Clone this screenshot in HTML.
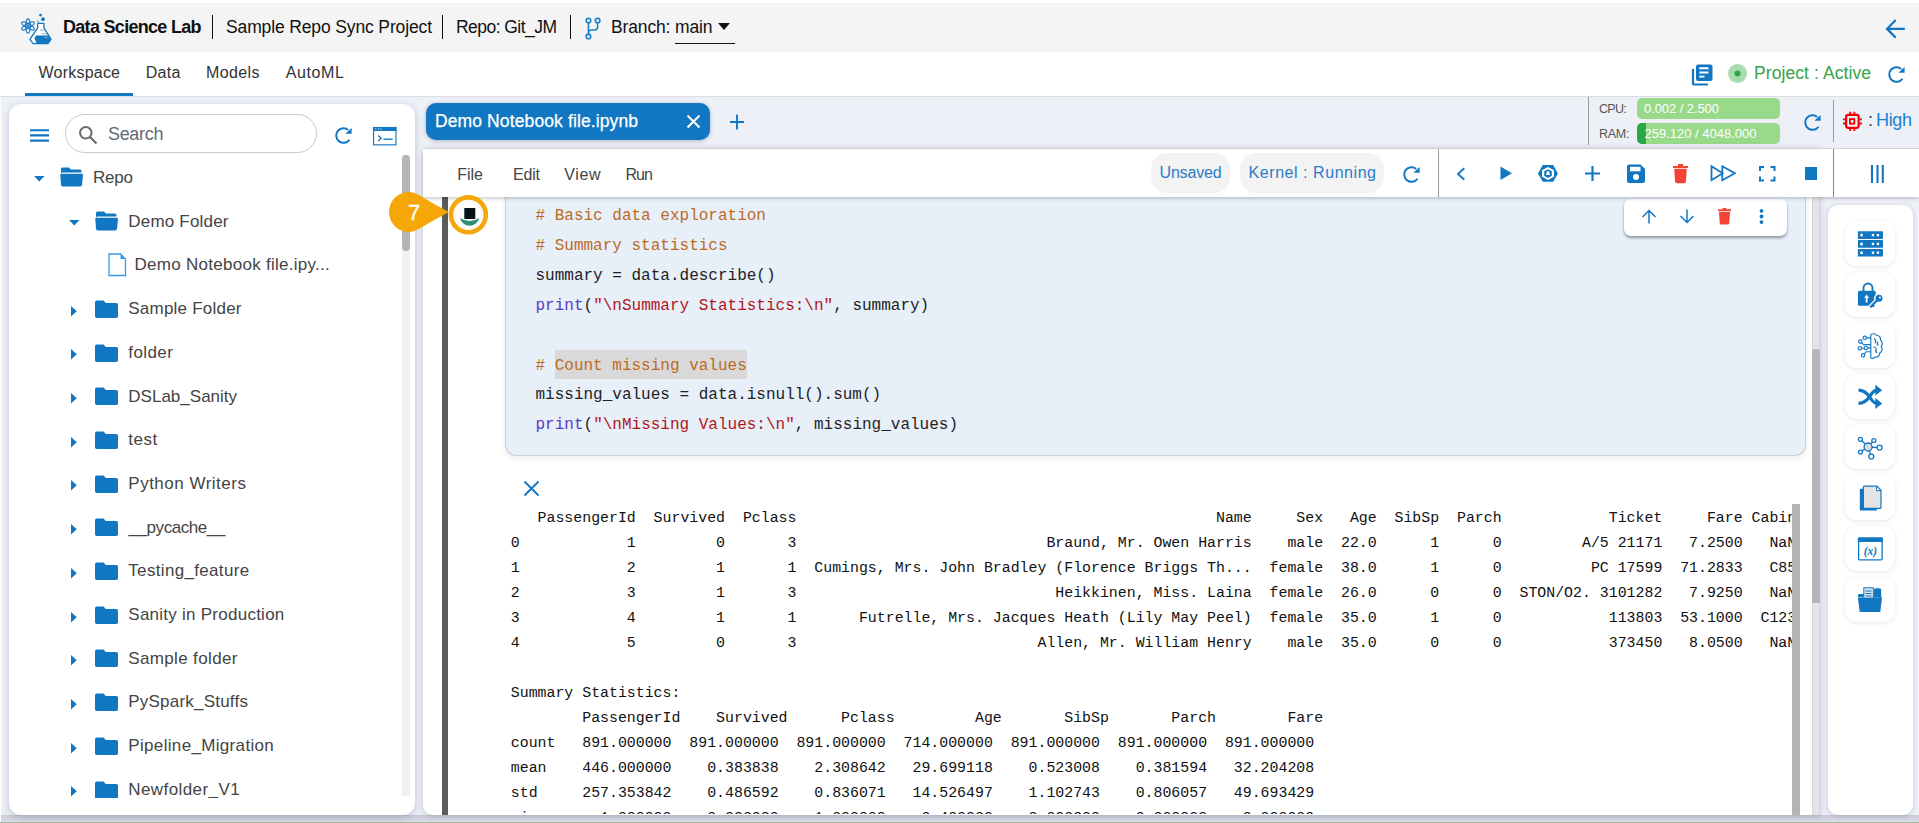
<!DOCTYPE html>
<html><head><meta charset="utf-8"><title>Data Science Lab</title>
<style>
html,body{margin:0;padding:0;width:1919px;height:823px;overflow:hidden;background:#eef0f8;}
body{position:relative;font-family:"Liberation Sans", sans-serif;}
.a{position:absolute;display:block;}
.t{position:absolute;white-space:pre;}
.mono{font-family:"Liberation Mono", monospace;}
</style></head><body>
<div class="a" style="left:0px;top:0px;width:1919px;height:3px;background:#fff"></div>
<div class="a" style="left:0px;top:3px;width:1919px;height:49px;background:#f4f4f4"></div>
<svg class="a" style="left:16px;top:10px;" width="38" height="36" viewBox="0 0 38 36">
<g fill="none" stroke="#1277c3" stroke-width="1.15">
<ellipse cx="12" cy="15.9" rx="2.2" ry="7.1"/>
<ellipse cx="12" cy="15.9" rx="2.2" ry="7.1" transform="rotate(60 12 15.9)"/>
<ellipse cx="12" cy="15.9" rx="2.2" ry="7.1" transform="rotate(120 12 15.9)"/>
<circle cx="12" cy="15.9" r="2.3" stroke-width="0.9"/>
</g>
<circle cx="12" cy="15.9" r="1.1" fill="#1277c3"/>
<path d="M21.7 13.4 H27.9 V17.8 L35.1 29.3 L31.9 33.7 H17.1 L13.9 29.3 L21.7 17.8 Z" fill="#fff" stroke="#1277c3" stroke-width="1.3" stroke-linejoin="round"/>
<path d="M21.2 10.6 L23.2 12.3" stroke="#1277c3" stroke-width="1"/>
<path d="M19.9 25.6 H32.8 L35.1 29.3 L31.9 33.7 H20.8 L18.5 28.6 Z" fill="#1277c3"/>
<circle cx="24.5" cy="5.1" r="1.4" fill="#1277c3"/>
<circle cx="27" cy="9.2" r="1.85" fill="#1277c3"/>
<path d="M24 20.1 H28.4 M26.1 23.8 H30.7" stroke="#999" stroke-width="0.9"/>
<path d="M28.2 27.6 H32.6" stroke="#9ab" stroke-width="0.9"/>
</svg>
<div class="t" style="left:63.00px;top:16.00px;font-size:18px;line-height:23px;color:#111;font-weight:700;letter-spacing:-0.698px;">Data Science Lab</div>
<div class="a" style="left:211.5px;top:15px;width:1.6px;height:24px;background:#111"></div>
<div class="t" style="left:226.00px;top:16.00px;font-size:17.5px;line-height:23px;color:#111;letter-spacing:-0.136px;">Sample Repo Sync Project</div>
<div class="a" style="left:441.5px;top:15px;width:1.6px;height:24px;background:#111"></div>
<div class="t" style="left:456.00px;top:16.00px;font-size:17.5px;line-height:23px;color:#111;letter-spacing:-0.544px;">Repo: Git_JM</div>
<div class="a" style="left:569.5px;top:15px;width:1.6px;height:24px;background:#111"></div>
<svg class="a" style="left:585.4px;top:17px;" width="18" height="23" viewBox="0 0 18 23"><g fill="none" stroke="#1a82c8" stroke-width="1.6">
<circle cx="3.45" cy="3.6" r="2.3"/><circle cx="12.6" cy="3.6" r="2.3"/><circle cx="3.45" cy="19.4" r="2.3"/>
<path d="M3.45 5.9 V17.1 M12.6 5.9 V10 Q12.6 13 9.6 13 H6.5 Q3.45 13 3.45 16"/></g></svg>
<div class="t" style="left:611.00px;top:16.00px;font-size:17.5px;line-height:23px;color:#111;letter-spacing:-0.146px;">Branch: main</div>
<svg class="a" style="left:718px;top:23px;" width="12" height="7" viewBox="0 0 12 7"><path d="M0 0 H12 L6 7 Z" fill="#111"/></svg>
<div class="a" style="left:675px;top:42.5px;width:60px;height:1.6px;background:#111"></div>
<svg class="a" style="left:1884px;top:17px;" width="24" height="24" viewBox="0 0 24 24"><path d="M20.8 11.9 H3.2 M11.7 3 L3 11.9 L11.7 20.6" fill="none" stroke="#1277c3" stroke-width="2.2" stroke-linejoin="miter"/></svg>
<div class="a" style="left:0px;top:52px;width:1919px;height:44px;background:#fff"></div>
<div class="a" style="left:0px;top:96px;width:1919px;height:1px;background:#dcdde3"></div>
<div class="t" style="left:38.60px;top:62.00px;font-size:16px;line-height:21px;color:#333;letter-spacing:0.207px;">Workspace</div>
<div class="t" style="left:145.80px;top:62.00px;font-size:16px;line-height:21px;color:#333;letter-spacing:0.232px;">Data</div>
<div class="t" style="left:206.00px;top:62.00px;font-size:16px;line-height:21px;color:#333;letter-spacing:0.384px;">Models</div>
<div class="t" style="left:285.80px;top:62.00px;font-size:16px;line-height:21px;color:#333;letter-spacing:0.570px;">AutoML</div>
<div class="a" style="left:25px;top:93px;width:108px;height:3px;background:#1277c3"></div>
<svg class="a" style="left:1691px;top:62.5px;" width="23" height="23" viewBox="0 0 23 23"><path d="M2 6 V20 Q2 21.5 3.5 21.5 H17" fill="none" stroke="#1277c3" stroke-width="2.2"/>
<rect x="5" y="1.5" width="16.5" height="16.5" rx="2" fill="#1277c3"/>
<path d="M8.3 5.3 H17.5 M8.3 9.5 H17.5 M8.3 13.6 H13.5" stroke="#fff" stroke-width="1.9"/></svg>
<svg class="a" style="left:1728px;top:64px;" width="19" height="19" viewBox="0 0 19 19"><circle cx="9.5" cy="9.5" r="9.5" fill="#a6dcae"/><circle cx="9.5" cy="9.5" r="3" fill="#2aa84a"/></svg>
<div class="t" style="left:1754.00px;top:62.00px;font-size:17.5px;line-height:23px;color:#35a348;letter-spacing:0.084px;">Project : Active</div>
<svg class="a" style="left:1886.5px;top:65.0px;" width="19" height="19" viewBox="0 0 19 19"><path d="M14.2 3.9 A7.3 7.3 0 1 0 15.5 13.7" fill="none" stroke="#1277c3" stroke-width="2.0"/>
<path d="M17.6 1.9 V7.8 H11.4 Z" fill="#1277c3"/></svg>
<div class="a" style="left:0px;top:97px;width:1919px;height:726px;background:#eef0f8"></div>
<div class="a" style="left:0px;top:815px;width:1919px;height:8px;background:linear-gradient(#c8ccd7,#dde0e9)"></div>
<div class="a" style="left:0px;top:97px;width:1px;height:726px;background:#fff"></div>
<div class="a" style="left:0px;top:822px;width:1919px;height:1px;background:#a9baa6"></div>
<div class="a" style="left:9px;top:104px;width:406px;height:711px;background:#fff;border-radius:12px;box-shadow:0 2px 7px rgba(60,70,100,.28)"></div>
<svg class="a" style="left:30px;top:128px;" width="19" height="15" viewBox="0 0 19 15"><path d="M0 2.2 H19 M0 7.4 H19 M0 12.6 H19" stroke="#1277c3" stroke-width="2.1"/></svg>
<div class="a" style="left:65px;top:114px;width:251.5px;height:39px;border:1px solid #c9c9c9;border-radius:20px;box-sizing:border-box;background:#fff"></div>
<svg class="a" style="left:78px;top:126px;" width="20" height="20" viewBox="0 0 20 20"><circle cx="7.8" cy="6.8" r="5.8" fill="none" stroke="#6b6b6b" stroke-width="2"/><path d="M12 11 L18.5 17.5" stroke="#6b6b6b" stroke-width="2.2"/></svg>
<div class="t" style="left:108.00px;top:123.00px;font-size:18px;line-height:23px;color:#5f6b76;letter-spacing:-0.327px;">Search</div>
<svg class="a" style="left:333.8px;top:126.30000000000001px;" width="19" height="19" viewBox="0 0 19 19"><path d="M14.2 3.9 A7.3 7.3 0 1 0 15.5 13.7" fill="none" stroke="#1277c3" stroke-width="2.0"/>
<path d="M17.6 1.9 V7.8 H11.4 Z" fill="#1277c3"/></svg>
<svg class="a" style="left:372px;top:126px;" width="25" height="20" viewBox="0 0 25 20"><rect x="1.55" y="1.55" width="22.4" height="17.3" fill="none" stroke="#1277c3" stroke-width="1.15"/>
<rect x="1" y="1" width="23.5" height="4" fill="#1277c3"/>
<path d="M3.7 2.3 v1.5 M6.4 2.3 v1.5 M9.1 2.3 v1.5" stroke="#cfe3f3" stroke-width="0.95"/>
<path d="M6.3 9.5 L9 12.3 L6.3 15" fill="none" stroke="#1277c3" stroke-width="1.35"/>
<path d="M11.4 13.2 H20.7" stroke="#1277c3" stroke-width="1.35"/></svg>
<div class="a" style="left:402px;top:155px;width:8px;height:641px;background:#f1f1f1"></div>
<div class="a" style="left:402px;top:155px;width:8px;height:96px;background:#b5b5b5;border-radius:4px"></div>
<svg class="a" style="left:34px;top:176px;" width="11" height="6" viewBox="0 0 11 6"><path d="M0 0 H10.5 L5.25 5.5 Z" fill="#1277c3"/></svg>
<svg class="a" style="left:59.7px;top:167px;" width="24" height="20" viewBox="0 0 24 20"><path d="M1 2 Q1 0.5 2.5 0.5 H9 L11 2.5 H20 Q21.5 2.5 21.5 4 V5.5 H2.5 Q1 5.5 1 7 Z" fill="#1277c3"/><path d="M0.3 7.8 Q0.3 6.8 1.5 6.8 H21.5 Q23 6.8 23 8 L22 17.8 Q21.8 19.4 20.3 19.4 H2.6 Q1.2 19.4 1 17.8 Z" fill="#1277c3"/></svg>
<div class="t" style="left:93.00px;top:167.00px;font-size:17px;line-height:22px;color:#444;letter-spacing:-0.213px;">Repo</div>
<svg class="a" style="left:69.4px;top:220.0px;" width="11" height="6" viewBox="0 0 11 6"><path d="M0 0 H10.5 L5.25 5.5 Z" fill="#1277c3"/></svg>
<svg class="a" style="left:94.8px;top:210.89999999999998px;" width="24" height="20" viewBox="0 0 24 20"><path d="M1 2 Q1 0.5 2.5 0.5 H9 L11 2.5 H20 Q21.5 2.5 21.5 4 V5.5 H2.5 Q1 5.5 1 7 Z" fill="#1277c3"/><path d="M0.3 7.8 Q0.3 6.8 1.5 6.8 H21.5 Q23 6.8 23 8 L22 17.8 Q21.8 19.4 20.3 19.4 H2.6 Q1.2 19.4 1 17.8 Z" fill="#1277c3"/></svg>
<div class="t" style="left:128.30px;top:211.00px;font-size:17px;line-height:22px;color:#444;letter-spacing:0.195px;">Demo Folder</div>
<svg class="a" style="left:108px;top:252.5px;" width="19" height="24" viewBox="0 0 19 24"><path d="M1 1 H12.5 L17.5 6 V22.5 H1 Z" fill="#fff" stroke="#3a98e6" stroke-width="1.3"/><path d="M12.5 1 V6 H17.5 Z" fill="#3a98e6"/></svg>
<div class="t" style="left:134.50px;top:254.00px;font-size:17px;line-height:22px;color:#444;letter-spacing:0.277px;">Demo Notebook file.ipy...</div>
<div class="a" style="left:0;top:0;width:402px;height:798px;overflow:hidden">
<svg class="a" style="left:71px;top:305.6px;" width="6" height="11" viewBox="0 0 6 11"><path d="M0 0 V10.5 L5.8 5.25 Z" fill="#1277c3"/></svg>
<svg class="a" style="left:94.8px;top:299.8px;" width="24" height="19" viewBox="0 0 24 19"><path d="M0 2.2 Q0 0.5 1.7 0.5 H8.5 L10.8 3 H21.3 Q23 3 23 4.7 V16.3 Q23 18 21.3 18 H1.7 Q0 18 0 16.3 Z" fill="#1277c3"/></svg>
<div class="t" style="left:128.30px;top:298.00px;font-size:17px;line-height:22px;color:#444;letter-spacing:0.221px;">Sample Folder</div>
<svg class="a" style="left:71px;top:349.3px;" width="6" height="11" viewBox="0 0 6 11"><path d="M0 0 V10.5 L5.8 5.25 Z" fill="#1277c3"/></svg>
<svg class="a" style="left:94.8px;top:343.5px;" width="24" height="19" viewBox="0 0 24 19"><path d="M0 2.2 Q0 0.5 1.7 0.5 H8.5 L10.8 3 H21.3 Q23 3 23 4.7 V16.3 Q23 18 21.3 18 H1.7 Q0 18 0 16.3 Z" fill="#1277c3"/></svg>
<div class="t" style="left:128.30px;top:342.00px;font-size:17px;line-height:22px;color:#444;letter-spacing:0.416px;">folder</div>
<svg class="a" style="left:71px;top:393.0px;" width="6" height="11" viewBox="0 0 6 11"><path d="M0 0 V10.5 L5.8 5.25 Z" fill="#1277c3"/></svg>
<svg class="a" style="left:94.8px;top:387.2px;" width="24" height="19" viewBox="0 0 24 19"><path d="M0 2.2 Q0 0.5 1.7 0.5 H8.5 L10.8 3 H21.3 Q23 3 23 4.7 V16.3 Q23 18 21.3 18 H1.7 Q0 18 0 16.3 Z" fill="#1277c3"/></svg>
<div class="t" style="left:128.30px;top:386.00px;font-size:17px;line-height:22px;color:#444;letter-spacing:0.011px;">DSLab_Sanity</div>
<svg class="a" style="left:71px;top:436.70000000000005px;" width="6" height="11" viewBox="0 0 6 11"><path d="M0 0 V10.5 L5.8 5.25 Z" fill="#1277c3"/></svg>
<svg class="a" style="left:94.8px;top:430.90000000000003px;" width="24" height="19" viewBox="0 0 24 19"><path d="M0 2.2 Q0 0.5 1.7 0.5 H8.5 L10.8 3 H21.3 Q23 3 23 4.7 V16.3 Q23 18 21.3 18 H1.7 Q0 18 0 16.3 Z" fill="#1277c3"/></svg>
<div class="t" style="left:128.30px;top:429.00px;font-size:17px;line-height:22px;color:#444;letter-spacing:0.501px;">test</div>
<svg class="a" style="left:71px;top:480.40000000000003px;" width="6" height="11" viewBox="0 0 6 11"><path d="M0 0 V10.5 L5.8 5.25 Z" fill="#1277c3"/></svg>
<svg class="a" style="left:94.8px;top:474.6px;" width="24" height="19" viewBox="0 0 24 19"><path d="M0 2.2 Q0 0.5 1.7 0.5 H8.5 L10.8 3 H21.3 Q23 3 23 4.7 V16.3 Q23 18 21.3 18 H1.7 Q0 18 0 16.3 Z" fill="#1277c3"/></svg>
<div class="t" style="left:128.30px;top:473.00px;font-size:17px;line-height:22px;color:#444;letter-spacing:0.495px;">Python Writers</div>
<svg class="a" style="left:71px;top:524.1px;" width="6" height="11" viewBox="0 0 6 11"><path d="M0 0 V10.5 L5.8 5.25 Z" fill="#1277c3"/></svg>
<svg class="a" style="left:94.8px;top:518.3000000000001px;" width="24" height="19" viewBox="0 0 24 19"><path d="M0 2.2 Q0 0.5 1.7 0.5 H8.5 L10.8 3 H21.3 Q23 3 23 4.7 V16.3 Q23 18 21.3 18 H1.7 Q0 18 0 16.3 Z" fill="#1277c3"/></svg>
<div class="t" style="left:128.57px;top:517.00px;font-size:17px;line-height:22px;color:#444;letter-spacing:-0.440px;">__pycache__</div>
<svg class="a" style="left:71px;top:567.8px;" width="6" height="11" viewBox="0 0 6 11"><path d="M0 0 V10.5 L5.8 5.25 Z" fill="#1277c3"/></svg>
<svg class="a" style="left:94.8px;top:562.0px;" width="24" height="19" viewBox="0 0 24 19"><path d="M0 2.2 Q0 0.5 1.7 0.5 H8.5 L10.8 3 H21.3 Q23 3 23 4.7 V16.3 Q23 18 21.3 18 H1.7 Q0 18 0 16.3 Z" fill="#1277c3"/></svg>
<div class="t" style="left:128.30px;top:560.00px;font-size:17px;line-height:22px;color:#444;letter-spacing:0.326px;">Testing_feature</div>
<svg class="a" style="left:71px;top:611.5px;" width="6" height="11" viewBox="0 0 6 11"><path d="M0 0 V10.5 L5.8 5.25 Z" fill="#1277c3"/></svg>
<svg class="a" style="left:94.8px;top:605.7px;" width="24" height="19" viewBox="0 0 24 19"><path d="M0 2.2 Q0 0.5 1.7 0.5 H8.5 L10.8 3 H21.3 Q23 3 23 4.7 V16.3 Q23 18 21.3 18 H1.7 Q0 18 0 16.3 Z" fill="#1277c3"/></svg>
<div class="t" style="left:128.30px;top:604.00px;font-size:17px;line-height:22px;color:#444;letter-spacing:0.253px;">Sanity in Production</div>
<svg class="a" style="left:71px;top:655.2px;" width="6" height="11" viewBox="0 0 6 11"><path d="M0 0 V10.5 L5.8 5.25 Z" fill="#1277c3"/></svg>
<svg class="a" style="left:94.8px;top:649.4000000000001px;" width="24" height="19" viewBox="0 0 24 19"><path d="M0 2.2 Q0 0.5 1.7 0.5 H8.5 L10.8 3 H21.3 Q23 3 23 4.7 V16.3 Q23 18 21.3 18 H1.7 Q0 18 0 16.3 Z" fill="#1277c3"/></svg>
<div class="t" style="left:128.30px;top:648.00px;font-size:17px;line-height:22px;color:#444;letter-spacing:0.351px;">Sample folder</div>
<svg class="a" style="left:71px;top:698.9000000000001px;" width="6" height="11" viewBox="0 0 6 11"><path d="M0 0 V10.5 L5.8 5.25 Z" fill="#1277c3"/></svg>
<svg class="a" style="left:94.8px;top:693.1000000000001px;" width="24" height="19" viewBox="0 0 24 19"><path d="M0 2.2 Q0 0.5 1.7 0.5 H8.5 L10.8 3 H21.3 Q23 3 23 4.7 V16.3 Q23 18 21.3 18 H1.7 Q0 18 0 16.3 Z" fill="#1277c3"/></svg>
<div class="t" style="left:128.30px;top:691.00px;font-size:17px;line-height:22px;color:#444;letter-spacing:0.211px;">PySpark_Stuffs</div>
<svg class="a" style="left:71px;top:742.6px;" width="6" height="11" viewBox="0 0 6 11"><path d="M0 0 V10.5 L5.8 5.25 Z" fill="#1277c3"/></svg>
<svg class="a" style="left:94.8px;top:736.8000000000001px;" width="24" height="19" viewBox="0 0 24 19"><path d="M0 2.2 Q0 0.5 1.7 0.5 H8.5 L10.8 3 H21.3 Q23 3 23 4.7 V16.3 Q23 18 21.3 18 H1.7 Q0 18 0 16.3 Z" fill="#1277c3"/></svg>
<div class="t" style="left:128.30px;top:735.00px;font-size:17px;line-height:22px;color:#444;letter-spacing:0.332px;">Pipeline_Migration</div>
<svg class="a" style="left:71px;top:786.3000000000001px;" width="6" height="11" viewBox="0 0 6 11"><path d="M0 0 V10.5 L5.8 5.25 Z" fill="#1277c3"/></svg>
<svg class="a" style="left:94.8px;top:780.5000000000001px;" width="24" height="19" viewBox="0 0 24 19"><path d="M0 2.2 Q0 0.5 1.7 0.5 H8.5 L10.8 3 H21.3 Q23 3 23 4.7 V16.3 Q23 18 21.3 18 H1.7 Q0 18 0 16.3 Z" fill="#1277c3"/></svg>
<div class="t" style="left:128.30px;top:779.00px;font-size:17px;line-height:22px;color:#444;letter-spacing:0.411px;">Newfolder_V1</div>
</div>
<div class="a" style="left:426px;top:103px;width:284px;height:37px;background:#1277c3;border-radius:10px;box-shadow:0 1px 4px rgba(0,0,0,.25)"></div>
<div class="t" style="left:435.00px;top:110.00px;font-size:17.5px;line-height:23px;color:#fff;letter-spacing:0.114px;-webkit-text-stroke:0.25px #fff;">Demo Notebook file.ipynb</div>
<svg class="a" style="left:686px;top:115px;" width="15" height="14" viewBox="0 0 15 14"><path d="M1.5 0.6 L13.5 12.6 M13.5 0.6 L1.5 12.6" stroke="#fff" stroke-width="2.1"/></svg>
<svg class="a" style="left:729px;top:113.5px;" width="16" height="16" viewBox="0 0 16 16"><path d="M8 0.5 V15.5 M1 8 H15" stroke="#1277c3" stroke-width="1.9"/></svg>
<div class="a" style="left:1587.5px;top:97px;width:1px;height:48px;background:#9a9a9a"></div>
<div class="t" style="left:1599.00px;top:101.00px;font-size:12.5px;line-height:16px;color:#555;letter-spacing:-0.687px;">CPU:</div>
<div class="t" style="left:1599.00px;top:126.00px;font-size:12.5px;line-height:16px;color:#555;letter-spacing:-0.249px;">RAM:</div>
<div class="a" style="left:1637px;top:98px;width:143px;height:21px;background:#98d98a;border-radius:5px"></div>
<div class="a" style="left:1637px;top:123px;width:143px;height:21px;background:#98d98a;border-radius:5px;overflow:hidden"></div>
<div class="a" style="left:1637px;top:123px;width:9px;height:21px;background:#28a745;border-radius:5px 0 0 5px"></div>
<div class="t" style="left:1644.00px;top:100.00px;font-size:13px;line-height:17px;color:#fff;letter-spacing:-0.075px;">0.002 / 2.500</div>
<div class="t" style="left:1644.50px;top:125.00px;font-size:13px;line-height:17px;color:#fff;">259.120 / 4048.000</div>
<svg class="a" style="left:1802.5px;top:112.5px;" width="19" height="19" viewBox="0 0 19 19"><path d="M14.2 3.9 A7.3 7.3 0 1 0 15.5 13.7" fill="none" stroke="#1277c3" stroke-width="2.0"/>
<path d="M17.6 1.9 V7.8 H11.4 Z" fill="#1277c3"/></svg>
<div class="a" style="left:1833px;top:100px;width:1px;height:42px;background:#9a9a9a"></div>
<svg class="a" style="left:1842px;top:111px;" width="21" height="21" viewBox="0 0 21 21"><g fill="none" stroke="#f50000"><rect x="4.1" y="3.9" width="12.6" height="12.9" rx="2" stroke-width="2.2"/><rect x="7.9" y="8.1" width="4.4" height="4.6" stroke-width="1.8"/>
<path d="M8.2 0.8 V3 M12.4 0.8 V3 M8.2 17.8 V20 M12.4 17.8 V20 M1 8.3 H3 M1 12.5 H3 M17.8 8.3 H20 M17.8 12.5 H20" stroke-width="1.8"/></g></svg>
<div class="t" style="left:1868.00px;top:109.00px;font-size:18px;line-height:23px;color:#333;">:</div>
<div class="t" style="left:1876.00px;top:109.00px;font-size:18px;line-height:23px;color:#1a7fd0;letter-spacing:-0.341px;">High</div>
<div class="a" style="left:423px;top:148px;width:1397px;height:667px;background:#fff;border-radius:10px 0 0 10px;box-shadow:0 1px 6px rgba(60,70,100,.25)"></div>
<div class="a" style="left:442px;top:197px;width:6px;height:618px;background:#5b5b5b"></div>
<div class="a" style="left:505px;top:190px;width:1301px;height:265.5px;background:#e7eff9;border:1px solid #c9cfd4;border-top:none;border-radius:0 0 11px 11px;box-sizing:border-box;box-shadow:0 2px 6px rgba(0,0,0,.08)"></div>
<div class="a" style="left:1812px;top:197px;width:8px;height:618px;background:#e4e4e4;box-shadow:inset 1px 0 0 #d6d6d6, inset -1px 0 0 #d6d6d6"></div>
<div class="a" style="left:1812px;top:349px;width:8px;height:254px;background:#b5b5b5;border-radius:3px 3px 0 0"></div>
<div class="a" style="left:555.3px;top:349.5px;width:191.7px;height:29.5px;background:#d9d9d9"></div>
<div class="t mono" style="left:535.5px;top:201.00px;font-size:16px;line-height:30px"><span style="color:#bd6a1f"># Basic data exploration</span></div>
<div class="t mono" style="left:535.5px;top:231.00px;font-size:16px;line-height:30px"><span style="color:#bd6a1f"># Summary statistics</span></div>
<div class="t mono" style="left:535.5px;top:261.00px;font-size:16px;line-height:30px"><span style="color:#222">summary = data.describe()</span></div>
<div class="t mono" style="left:535.5px;top:291.00px;font-size:16px;line-height:30px"><span style="color:#5b3cc4">print</span><span style="color:#222">(</span><span style="color:#b1161c">"\nSummary Statistics:\n"</span><span style="color:#222">, summary)</span></div>
<div class="t mono" style="left:535.5px;top:351.00px;font-size:16px;line-height:30px"><span style="color:#bd6a1f"># Count missing values</span></div>
<div class="t mono" style="left:535.5px;top:380.00px;font-size:16px;line-height:30px"><span style="color:#222">missing_values = data.isnull().sum()</span></div>
<div class="t mono" style="left:535.5px;top:410.00px;font-size:16px;line-height:30px"><span style="color:#5b3cc4">print</span><span style="color:#222">(</span><span style="color:#b1161c">"\nMissing Values:\n"</span><span style="color:#222">, missing_values)</span></div>
<div class="a" style="left:1624px;top:199px;width:163px;height:36.5px;background:#fff;border-radius:7px;box-shadow:0 2px 3px rgba(0,0,0,.38)"></div>
<svg class="a" style="left:1641px;top:209px;" width="16" height="15" viewBox="0 0 16 15"><path d="M8 14.5 V1.5 M1.5 8 L8 1.5 L14.5 8" fill="none" stroke="#1277c3" stroke-width="1.5"/></svg>
<svg class="a" style="left:1679px;top:209px;" width="16" height="15" viewBox="0 0 16 15"><path d="M8 0.5 V13.5 M1.5 7 L8 13.5 L14.5 7" fill="none" stroke="#1277c3" stroke-width="1.5"/></svg>
<svg class="a" style="left:1716.5px;top:208px;" width="15" height="17" viewBox="0 0 15 17"><path d="M1 2.2 H14 M5.5 1 H9.5" stroke="#f44336" stroke-width="2"/><path d="M2 4 H13 L12.2 15.2 Q12 16.5 10.8 16.5 H4.2 Q3 16.5 2.8 15.2 Z" fill="#f44336"/></svg>
<svg class="a" style="left:1759px;top:209px;" width="5" height="15" viewBox="0 0 5 15"><circle cx="2.5" cy="1.9" r="1.9" fill="#1277c3"/><circle cx="2.5" cy="7.5" r="1.9" fill="#1277c3"/><circle cx="2.5" cy="13.1" r="1.9" fill="#1277c3"/></svg>
<svg class="a" style="left:523px;top:480px;" width="17" height="17" viewBox="0 0 17 17"><path d="M1.5 1.5 L15.5 15.5 M15.5 1.5 L1.5 15.5" stroke="#1277c3" stroke-width="1.9"/></svg>
<div class="a" style="left:448px;top:197px;width:1344px;height:617px;overflow:hidden">
<div class="t mono" style="left:62.80px;top:309.00px;font-size:14.883px;line-height:25px;color:#111">   PassengerId  Survived  Pclass                                               Name     Sex   Age  SibSp  Parch            Ticket     Fare Cabin Embarked
0            1         0       3                            Braund, Mr. Owen Harris    male  22.0      1      0         A/5 21171   7.2500   NaN        S
1            2         1       1  Cumings, Mrs. John Bradley (Florence Briggs Th...  female  38.0      1      0          PC 17599  71.2833   C85        C
2            3         1       3                             Heikkinen, Miss. Laina  female  26.0      0      0  STON/O2. 3101282   7.9250   NaN        S
3            4         1       1       Futrelle, Mrs. Jacques Heath (Lily May Peel)  female  35.0      1      0            113803  53.1000  C123        S
4            5         0       3                           Allen, Mr. William Henry    male  35.0      0      0            373450   8.0500   NaN        S

Summary Statistics:
        PassengerId    Survived      Pclass         Age       SibSp       Parch        Fare
count   891.000000  891.000000  891.000000  714.000000  891.000000  891.000000  891.000000
mean    446.000000    0.383838    2.308642   29.699118    0.523008    0.381594   32.204208
std     257.353842    0.486592    0.836071   14.526497    1.102743    0.806057   49.693429
min       1.000000    0.000000    1.000000    0.420000    0.000000    0.000000    0.000000</div>
</div>
<div class="a" style="left:1792px;top:504px;width:8px;height:311px;background:#b4b4b4"></div>
<div class="a" style="left:423px;top:148px;width:1496px;height:49px;background:#fff;border-top:1px solid #d2d2d2;box-sizing:border-box;box-shadow:0 2px 3px rgba(0,0,0,.18)"></div>
<div class="t" style="left:457.30px;top:164.00px;font-size:16px;line-height:21px;color:#444;letter-spacing:-0.030px;">File</div>
<div class="t" style="left:513.00px;top:164.00px;font-size:16px;line-height:21px;color:#444;letter-spacing:-0.193px;">Edit</div>
<div class="t" style="left:564.30px;top:164.00px;font-size:16px;line-height:21px;color:#444;letter-spacing:0.590px;">View</div>
<div class="t" style="left:625.40px;top:164.00px;font-size:16px;line-height:21px;color:#444;letter-spacing:-0.980px;">Run</div>
<div class="a" style="left:1151px;top:153px;width:79px;height:40px;background:#f3f3f3;border-radius:16px"></div>
<div class="t" style="left:1159.50px;top:162.00px;font-size:16px;line-height:21px;color:#2a7cc8;letter-spacing:-0.176px;">Unsaved</div>
<div class="a" style="left:1240px;top:153px;width:144px;height:40px;background:#f3f3f3;border-radius:16px"></div>
<div class="t" style="left:1248.60px;top:162.00px;font-size:16px;line-height:21px;color:#2a7cc8;letter-spacing:0.547px;">Kernel : Running</div>
<svg class="a" style="left:1401.8px;top:165.3px;" width="19" height="19" viewBox="0 0 19 19"><path d="M14.2 3.9 A7.3 7.3 0 1 0 15.5 13.7" fill="none" stroke="#1277c3" stroke-width="2.0"/>
<path d="M17.6 1.9 V7.8 H11.4 Z" fill="#1277c3"/></svg>
<div class="a" style="left:1438px;top:149px;width:1px;height:48px;background:#9a9a9a"></div>
<svg class="a" style="left:1455px;top:167px;" width="12" height="14" viewBox="0 0 12 14"><path d="M9.3 1.3 L3 7 L9.3 12.7" fill="none" stroke="#1277c3" stroke-width="1.9"/></svg>
<svg class="a" style="left:1500px;top:166px;" width="13" height="15" viewBox="0 0 13 15"><path d="M0.5 0.5 L12 7.2 L0.5 14 Z" fill="#1277c3"/></svg>
<svg class="a" style="left:1537px;top:164px;" width="22" height="19" viewBox="0 0 22 19"><path d="M5.8 0.9 H16.2 L20.9 9.4 L16.2 17.8 H5.8 L0.9 9.4 Z" fill="#1277c3"/><path d="M11 3 L17 6.25 V12.75 L11 16 L5 12.75 V6.25 Z" fill="#fff"/><path d="M11 5.2 L14.8 7.3 V11.7 L11 13.9 L7.2 11.7 V7.3 Z" fill="#1277c3"/><path d="M11 6.9 Q11.8 6.9 12.2 8.3 L13.1 11 H8.9 L9.8 8.3 Q10.2 6.9 11 6.9 Z" fill="#fff"/></svg>
<svg class="a" style="left:1584px;top:165px;" width="17" height="17" viewBox="0 0 17 17"><path d="M8.5 1 V16 M1 8.5 H16" stroke="#1277c3" stroke-width="2.2"/></svg>
<svg class="a" style="left:1626px;top:164px;" width="20" height="20" viewBox="0 0 20 20"><path d="M1 2.5 Q1 0.5 3 0.5 H14.5 L19 5 V17 Q19 19 17 19 H3 Q1 19 1 17 Z" fill="#1277c3"/><rect x="4" y="2.8" width="10.5" height="4.5" fill="#fff"/><circle cx="10" cy="13" r="3" fill="#fff"/></svg>
<svg class="a" style="left:1671.5px;top:163.5px;" width="17" height="20" viewBox="0 0 17 20"><path d="M1 3 H16 M6 1.2 H11" stroke="#f44336" stroke-width="2.2"/><path d="M2.2 4.8 H14.8 L13.9 17.6 Q13.7 19.3 12 19.3 H5 Q3.3 19.3 3.1 17.6 Z" fill="#f44336"/></svg>
<svg class="a" style="left:1710px;top:165px;" width="27" height="17" viewBox="0 0 27 17"><path d="M1.5 1.2 L12.6 8.2 L1.5 15.2 Z M12.3 1.2 L24.8 8.2 L12.3 15.2 Z" fill="none" stroke="#1277c3" stroke-width="1.8" stroke-linejoin="miter"/></svg>
<svg class="a" style="left:1759px;top:166px;" width="17" height="16" viewBox="0 0 17 16"><path d="M1 5 V1 H5 M11.5 1 H15.5 V5 M15.5 10.5 V14.5 H11.5 M5 14.5 H1 V10.5" fill="none" stroke="#1277c3" stroke-width="2"/></svg>
<div class="a" style="left:1804.5px;top:167px;width:12.5px;height:12.7px;background:#1277c3"></div>
<div class="a" style="left:1833px;top:149px;width:1px;height:48px;background:#8a8a8a"></div>
<svg class="a" style="left:1870px;top:165px;" width="15" height="19" viewBox="0 0 15 19"><path d="M2 0 V18 M7.5 0 V18 M12.8 0 V18" stroke="#1277c3" stroke-width="2.1"/></svg>
<svg class="a" style="left:387px;top:190px;" width="64" height="44" viewBox="0 0 64 44"><path d="M22 2 A20 20 0 1 0 22 42 C30 42 35 36 62 22 C35 8 30 2 22 2 Z" fill="#f5a70a"/></svg>
<div class="t" style="left:408.10px;top:198.00px;font-size:22px;line-height:29px;color:#fff;-webkit-text-stroke:0.3px #fff;">7</div>
<svg class="a" style="left:448px;top:194px;" width="41" height="41" viewBox="0 0 41 41"><circle cx="20.4" cy="20.8" r="17.4" fill="#fff" stroke="#f5a70a" stroke-width="4.6"/><circle cx="20.4" cy="20.8" r="13.5" fill="none" stroke="#eee" stroke-width="0.8"/><rect x="16.3" y="14" width="11" height="11" fill="#061017"/><path d="M12 24 A9.87 9.87 0 0 0 31.3 24 A17 17 0 0 1 12 24 Z" fill="#2f8c78"/></svg>
<div class="a" style="left:1828px;top:205px;width:85px;height:610px;background:#fff;border-radius:10px;box-shadow:0 1px 5px rgba(60,70,100,.25)"></div>
<div class="a" style="left:1845px;top:221.0px;width:50px;height:45px;background:#fff;border-radius:12px;box-shadow:0 1px 4px rgba(0,0,0,.10)"></div>
<div class="a" style="left:1845px;top:271.9px;width:50px;height:45px;background:#fff;border-radius:12px;box-shadow:0 1px 4px rgba(0,0,0,.10)"></div>
<div class="a" style="left:1845px;top:322.7px;width:50px;height:45px;background:#fff;border-radius:12px;box-shadow:0 1px 4px rgba(0,0,0,.10)"></div>
<div class="a" style="left:1845px;top:373.6px;width:50px;height:45px;background:#fff;border-radius:12px;box-shadow:0 1px 4px rgba(0,0,0,.10)"></div>
<div class="a" style="left:1845px;top:424.4px;width:50px;height:45px;background:#fff;border-radius:12px;box-shadow:0 1px 4px rgba(0,0,0,.10)"></div>
<div class="a" style="left:1845px;top:475.2px;width:50px;height:45px;background:#fff;border-radius:12px;box-shadow:0 1px 4px rgba(0,0,0,.10)"></div>
<div class="a" style="left:1845px;top:526.1px;width:50px;height:45px;background:#fff;border-radius:12px;box-shadow:0 1px 4px rgba(0,0,0,.10)"></div>
<div class="a" style="left:1845px;top:577.0px;width:50px;height:45px;background:#fff;border-radius:12px;box-shadow:0 1px 4px rgba(0,0,0,.10)"></div>
<svg class="a" style="left:1856px;top:231.3px;" width="28" height="26" viewBox="0 0 28 26"><g fill="#1277c3"><rect x="1.9" y="0.3" width="25.1" height="7.6" rx="0.6"/><rect x="1.9" y="9.1" width="25.1" height="7.6" rx="0.6"/><rect x="1.9" y="17.9" width="25.1" height="7.6" rx="0.6"/></g>
<g fill="#fff"><circle cx="5.5" cy="4.1" r="1.5"/><circle cx="5.5" cy="12.9" r="1.5"/><circle cx="5.5" cy="21.7" r="1.5"/>
<rect x="15.8" y="2.95" width="2.3" height="2.3"/><rect x="20.8" y="2.95" width="2.3" height="2.3"/><rect x="15.8" y="11.75" width="2.3" height="2.3"/><rect x="20.8" y="11.75" width="2.3" height="2.3"/><rect x="15.8" y="20.55" width="2.3" height="2.3"/><rect x="20.8" y="20.55" width="2.3" height="2.3"/></g></svg>
<svg class="a" style="left:1856px;top:282.12px;" width="28" height="26" viewBox="0 0 28 26"><path d="M7.5 9.5 V6 A4.5 4.5 0 0 1 16.5 6 V9.5" fill="none" stroke="#1277c3" stroke-width="1.9"/>
<rect x="1.9" y="8.8" width="17.9" height="15" rx="1.6" fill="#1277c3"/>
<path d="M10.6 14.5 V20.5" stroke="#fff" stroke-width="1.8"/><path d="M8.2 16 L10.6 12.6 L13 16 Z" fill="#fff"/>
<path d="M20.9 18.5 L13.8 25.6" stroke="#fff" stroke-width="4.6"/><circle cx="23" cy="16.3" r="5" fill="#fff"/>
<path d="M20.9 18.5 L14.2 25.2 M16.4 23 L18 24.6" stroke="#1277c3" stroke-width="2.2"/>
<circle cx="23" cy="16.3" r="3.5" fill="#1277c3"/><circle cx="23.9" cy="15.4" r="1" fill="#fff"/></svg>
<svg class="a" style="left:1856px;top:332.94px;" width="28" height="26" viewBox="0 0 28 26"><g fill="none" stroke="#1277c3" stroke-width="1.15">
<path d="M14.8 1.8 C16.5 0.3 19.3 0.4 20.4 2.3 C23.2 2.2 24.9 4.4 24.4 7 C26.4 8.4 26.7 11.6 25.2 13.4 C26.7 15.6 26 18.8 23.8 19.9 C23.9 22.8 21.4 24.7 18.8 24.1 C17.4 25.7 15.6 25.7 14.8 24.8 Z"/>
<path d="M18.3 5.5 Q20.6 7.5 19.2 10.3 M21.8 8.5 Q20.5 11 22.3 12.5 M20.5 15 Q18.8 17.5 20.7 20 M17.2 14.2 H19.8"/>
<path d="M10.5 4.8 H14.8 M5.8 9.9 L7.7 11.6 H14.8 M5.5 15.2 H8.1 M11.5 14.9 H14.8 M8.4 20.8 L10.2 18.7 H14.8"/>
<circle cx="8.8" cy="4.8" r="1.7"/><circle cx="4.4" cy="8.6" r="1.7"/><circle cx="3.8" cy="15.2" r="1.7"/><circle cx="9.8" cy="14.9" r="1.7"/><circle cx="7.1" cy="22.3" r="1.7"/>
</g></svg>
<svg class="a" style="left:1856px;top:383.76px;" width="28" height="26" viewBox="0 0 28 26"><g fill="none" stroke="#1277c3" stroke-width="3.2"><path d="M2.5 6.2 Q8.8 6.2 13.6 13 Q17.6 19.4 21 19.4"/><path d="M2.5 19.4 Q8.8 19.4 13.6 12.8 Q17.6 6.2 21 6.2"/></g>
<path d="M19.3 0.7 L26.2 6.2 L19.3 11.6 Z M19.3 14 L26.2 19.4 L19.3 24.9 Z" fill="#1277c3"/></svg>
<svg class="a" style="left:1856px;top:434.58px;" width="28" height="26" viewBox="0 0 28 26"><g stroke="#1277c3" stroke-width="1.3" fill="#fff"><path d="M12.1 12 L4.4 4.3 M12.1 12 L17.8 5.6 M12.1 12 L23.6 12.6 M12.1 12 L4.4 17.1 M12.1 12 L15.3 21.6"/>
<circle cx="4.4" cy="4.3" r="2"/><circle cx="17.8" cy="5.6" r="2"/><circle cx="23.6" cy="12.6" r="2.5"/><circle cx="4.4" cy="17.1" r="2"/><circle cx="15.3" cy="21.6" r="2.5"/>
<circle cx="12.1" cy="12" r="4" fill="#ddd"/></g></svg>
<svg class="a" style="left:1856px;top:485.4px;" width="28" height="26" viewBox="0 0 28 26"><rect x="3.8" y="3.8" width="17.2" height="21.7" rx="1" fill="#1277c3"/>
<path d="M8.3 1.2 H21 L25 5.2 V22.5 Q25 23.4 24.1 23.4 H8.3 Q7.4 23.4 7.4 22.5 V2.1 Q7.4 1.2 8.3 1.2 Z" fill="#e3e3e3" stroke="#1277c3" stroke-width="1.2"/>
<path d="M20.6 1.2 V5.6 H25 Z" fill="#fff" stroke="#1277c3" stroke-width="1"/></svg>
<svg class="a" style="left:1856px;top:536.22px;" width="28" height="26" viewBox="0 0 28 26"><rect x="2.6" y="2.2" width="23.5" height="21.6" rx="0.8" fill="none" stroke="#1277c3" stroke-width="1.3"/>
<rect x="1.9" y="1.5" width="24.9" height="4.6" rx="0.8" fill="#1277c3"/>
<text x="14.4" y="18.6" text-anchor="middle" font-family="Liberation Serif" font-style="italic" font-weight="bold" font-size="11.5" fill="#1277c3">(x)</text></svg>
<svg class="a" style="left:1856px;top:587.04px;" width="28" height="26" viewBox="0 0 28 26"><path d="M2 10.5 V8.2 Q2 7 3.2 7 H8 V10.5 Z" fill="#1277c3"/>
<path d="M18 10.5 V3 Q18 1.3 19.8 1.3 H23.5 Q25.2 1.3 25.2 3 V10.5 Z" fill="#1277c3"/>
<rect x="7.8" y="0.8" width="9.6" height="11" fill="#dde3ea" stroke="#1277c3" stroke-width="1"/>
<path d="M9.5 4 H15.5 M9.5 6.5 H15.5 M9.5 9 H15.5" stroke="#1277c3" stroke-width="1.1"/>
<path d="M1.9 11 L26.1 10.2 L24.3 25 H3.7 Z" fill="#1277c3"/></svg>
</body></html>
